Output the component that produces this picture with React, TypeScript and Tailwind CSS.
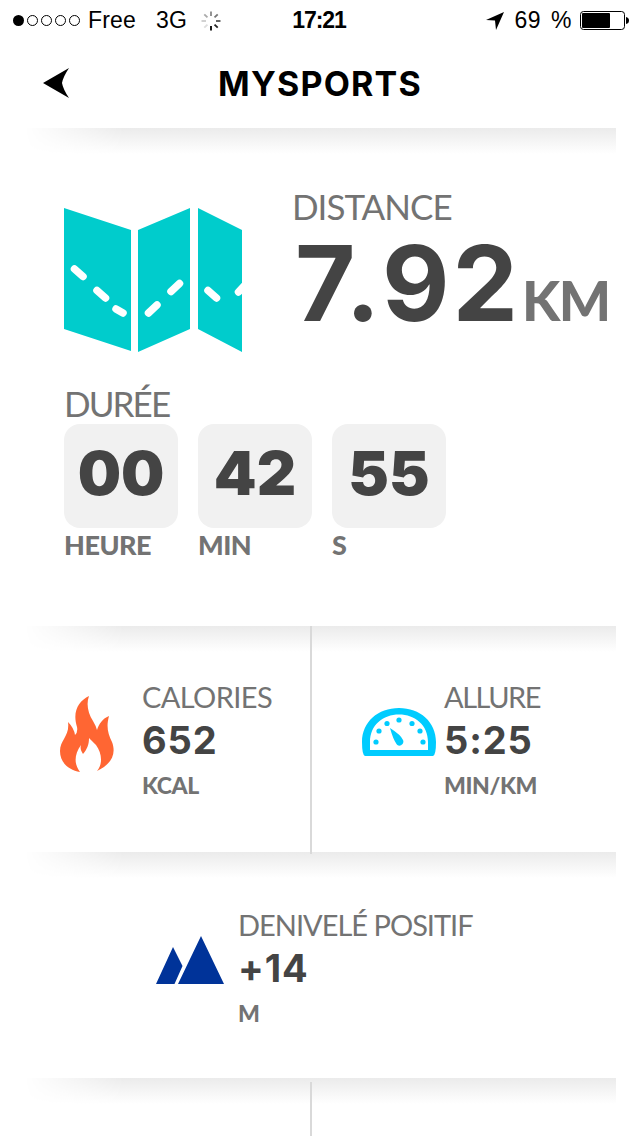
import type { ReactNode } from 'react'
import clsx from 'clsx'

const SPOKES = [
  { angle: 0, tone: '#888' },
  { angle: 45, tone: '#777' },
  { angle: 90, tone: '#555' },
  { angle: 135, tone: '#222' },
  { angle: 180, tone: '#000' },
  { angle: 225, tone: '#ddd' },
  { angle: 270, tone: '#ccc' },
  { angle: 315, tone: '#aaa' },
]

function Spinner() {
  return (
    <svg className="h-5 w-5" viewBox="-10 -10 20 20">
      {SPOKES.map(({ angle, tone }) => (
        <line key={angle} x1="0" y1="-5" x2="0" y2="-9.5" stroke={tone} strokeWidth="1.8" transform={`rotate(${angle})`} />
      ))}
    </svg>
  )
}

function StatusBar() {
  return (
    <div className="grid h-10 grid-cols-[1fr_auto_1fr] items-center pl-[13px] pr-[11px] pt-px font-['Liberation_Sans',sans-serif] text-[23px] leading-[39px] text-black">
      <div className="flex items-center">
        <div className="flex gap-[3px]">
          <span className="h-[11px] w-[11px] rounded-full bg-black" />
          {[0, 1, 2, 3].map((i) => (
            <span key={i} className="h-[11px] w-[11px] rounded-full border border-black" />
          ))}
        </div>
        <span className="ml-2 tracking-[0.2px]">Free</span>
        <span className="ml-5 mr-[14px]">3G</span>
        <Spinner />
      </div>
      <span className="mr-1 font-bold tracking-[-1.1px]">17:21</span>
      <div className="flex items-center justify-end">
        <svg className="mr-[11px] h-[18px] w-[18px]" viewBox="0 0 18 18">
          <path d="M18 0L10 18L9 8.5L0 8Z" />
        </svg>
        <span className="tracking-[0.5px] [word-spacing:3px]">69 %</span>
        <svg className="ml-2 h-[19px] w-[49px]" viewBox="0 0 49 19">
          <rect x="0.5" y="0.5" width="44" height="18" rx="3" fill="none" stroke="#000" />
          <rect x="2" y="2" width="28" height="15" rx="1" />
          <path d="M46 6Q49 6.5 49 9.5T46 13Z" />
        </svg>
      </div>
    </div>
  )
}

function Header() {
  return (
    <header className="grid h-[88px] grid-cols-[1fr_auto_1fr] items-center pl-[43px] pb-0.5">
      <svg className="h-[30px] w-[27px]" viewBox="0 0 27 30">
        <path d="M0 15L26 0Q20 9 19 15Q20 21 26 30Z" />
      </svg>
      <h1 className="mr-[43px] pt-0.5 font-[Inter,sans-serif] text-[34px] font-bold leading-[84px] tracking-[1.2px] text-black">MYSPORTS</h1>
    </header>
  )
}

/* The shadow fades in from the left and stops short of the right edge */
function Section({ className, children }: { className: string; children?: ReactNode }) {
  return (
    <section className={clsx('relative isolate', className)}>
      <div className="absolute left-6 right-6 top-0 -z-10 h-[26px] bg-linear-to-b from-[#ebebeb] to-white [mask-image:linear-gradient(to_right,transparent,black_100px)]" />
      {children}
    </section>
  )
}

function MapIcon() {
  return (
    <svg className="h-36 w-[178px]" viewBox="0 0 178 144">
      <path fill="#00cccc" d="M0 0L67 22V143L0 121ZM74 22L126 0V121L74 144ZM134 0L178 22V144L134 121Z" />
      <path
        fill="none"
        stroke="#fff"
        strokeWidth="7.5"
        strokeLinecap="round"
        d="M10.500 61L19 68.500M33 82.500L41.500 90M52 101L59 105M84.500 105L93 97M107 83.500L115.500 75.500M144 82.500L152.500 90M174.500 84L184 74"
      />
    </svg>
  )
}

function FlameIcon() {
  return (
    <svg className="h-[76px] w-[54px]" viewBox="0 0 54 76" fill="#ff6633">
      <path d="M29 0C26 8 28 17 33 25Q36 30 37 34C39 28 42 23 49 20C46 31 48 38 52 46C57 59 50 69 37 75C43 68 42 57 36 49Q31 44 29 42C29 49 27 53 23 58C21 55 20 53 21 49C14 59 14 68 20 76C9 74 0 67 0 55C0 44 10 40 8 26Q14 32 15 39Q18 36 17 31C12 15 19 5 29 0Z" />
    </svg>
  )
}

function GaugeIcon() {
  return (
    <svg className="h-12 w-[74px]" viewBox="0 0 74 48" fill="#00ccff">
      <path fillRule="evenodd" d="M3 48Q0 47 0 34C0 14 16 0 37 0S74 14 74 34Q74 47 71 48ZM8 42H66V34C66 17 53 6.500 37 6.500S8 17 8 34Z" />
      <circle cx="14" cy="34" r="2.600" />
      <circle cx="17" cy="23" r="2.600" />
      <circle cx="25" cy="15.500" r="2.600" />
      <circle cx="37" cy="12" r="2.600" />
      <circle cx="50" cy="15.500" r="2.600" />
      <circle cx="58" cy="23" r="2.600" />
      <circle cx="61" cy="34" r="2.600" />
      <path d="M28 20Q39 27 41 32C43 36 37 40 34.500 36Q31 31 28 20Z" />
    </svg>
  )
}

function MountainIcon() {
  return (
    <svg className="h-12 w-[68px]" viewBox="0 0 68 48" fill="#003399">
      <path d="M17 11L26.500 30L18.500 48H0ZM45 0L68 48H22Z" />
    </svg>
  )
}

function Stat({ label, value, unit, labelClass }: { label: string; value: string; unit: string; labelClass?: string }) {
  return (
    <div className="whitespace-nowrap">
      <div className={clsx('text-[29px] leading-10', labelClass)}>{label}</div>
      <div className="font-[Inter,sans-serif] text-[38px] font-bold leading-[46px] tracking-[0.9px] text-[#444]">{value}</div>
      <div className="mt-[2px] text-[23px] font-black leading-10 tracking-[-0.4px]">{unit}</div>
    </div>
  )
}

function TimeBox({ value, unit }: { value: string; unit: string }) {
  return (
    <div className="w-[114px]">
      <div className="flex h-[104px] items-center justify-center rounded-2xl bg-[#f1f1f1] pb-[5px] text-[#444]">
        <span className="font-[Inter,sans-serif] text-[61px] font-black leading-none">{value}</span>
      </div>
      <div className="text-[27px] font-black leading-[33px] tracking-[-0.5px]">{unit}</div>
    </div>
  )
}

export default function App() {
  return (
    <div className="h-[1136px] w-[640px] overflow-hidden bg-white font-[Lato,sans-serif] text-[#737373]">
      <StatusBar />
      <Header />

      <Section className="h-[498px] pl-16">
        <div className="flex h-[255px] pt-[60px]">
          <div className="pt-5">
            <MapIcon />
          </div>
          <div className="-mt-0.5 ml-[50px] whitespace-nowrap">
            <div className="text-[35px] leading-10 tracking-[-1px]">DISTANCE</div>
            <div className="flex items-baseline pt-px">
              <span className="ml-[3px] w-[227px] font-[Inter,sans-serif] text-[104px] font-bold leading-[112px] tracking-[3px] text-[#444]">7.92</span>
              <span className="text-[55px] font-black leading-[60px] tracking-[-1.5px]">KM</span>
            </div>
          </div>
        </div>
        <div className="mb-px text-[35px] leading-10 tracking-[-1.9px]">DURÉE</div>
        <div className="flex gap-5">
          <TimeBox value="00" unit="HEURE" />
          <TimeBox value="42" unit="MIN" />
          <TimeBox value="55" unit="S" />
        </div>
      </Section>

      <Section className="z-10 flex h-[226px]">
        <div className="flex h-[228px] w-[312px] shrink-0 border-r-2 border-[#d9d9d9] pl-[60px]">
          <div className="mr-7 pt-[70px]">
            <FlameIcon />
          </div>
          <div className="pt-[51px]">
            <Stat label="CALORIES" value="652" unit="KCAL" labelClass="tracking-[-0.6px]" />
          </div>
        </div>
        <div className="flex pl-[50px]">
          <div className="mr-2 pt-[82px]">
            <GaugeIcon />
          </div>
          <div className="pt-[51px]">
            <Stat label="ALLURE" value="5:25" unit="MIN/KM" labelClass="tracking-[-1.5px]" />
          </div>
        </div>
      </Section>

      <Section className="flex h-[226px] pl-[156px]">
        <div className="mr-[14px] pt-[84px]">
          <MountainIcon />
        </div>
        <div className="pt-[53px]">
          <Stat label="DENIVELÉ POSITIF" value="+14" unit="M" labelClass="tracking-[-1px]" />
        </div>
      </Section>

      <Section className="h-[58px] pt-1">
        <div className="h-full w-[312px] border-r-2 border-[#d9d9d9]" />
      </Section>
    </div>
  )
}
